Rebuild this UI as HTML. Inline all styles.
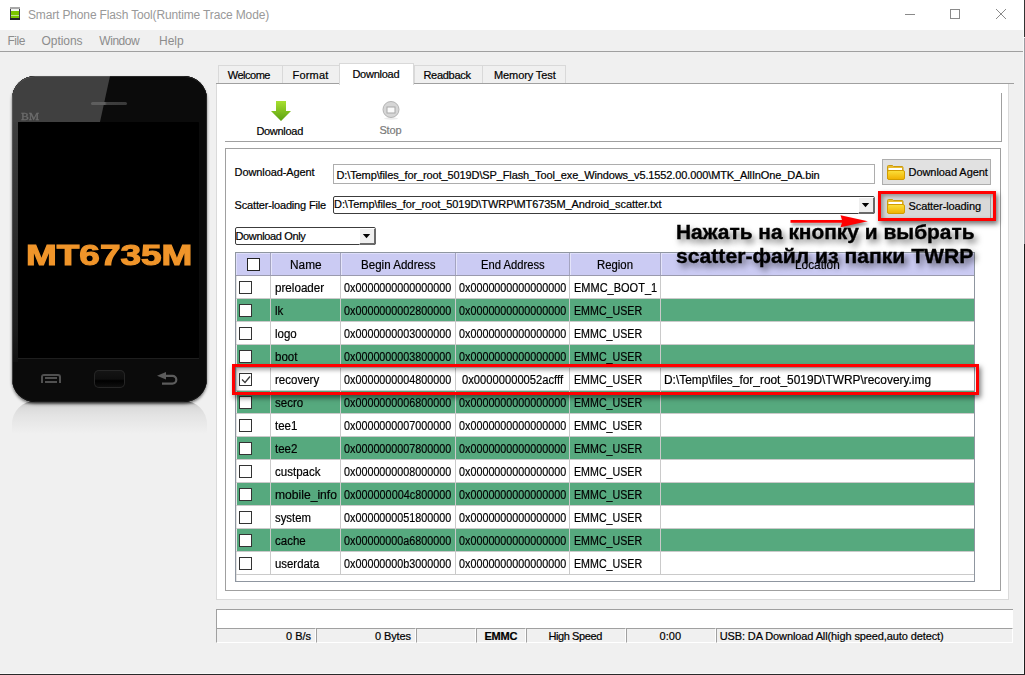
<!DOCTYPE html>
<html><head><meta charset="utf-8"><style>
html,body{margin:0;padding:0}
body{width:1025px;height:675px;overflow:hidden;position:relative;background:#f0f0f0;font-family:"Liberation Sans",sans-serif}
body div{position:absolute}
.t{white-space:nowrap;-webkit-text-stroke:0.2px currentColor}
</style></head><body>
<div style="left:0px;top:0px;width:1025px;height:30px;background:#fff"></div>
<div style="left:10px;top:7px;width:10px;height:13px;background:#3c3c46"></div>
<div style="left:10px;top:7px;width:10px;height:2px;background:#a8a8a8"></div>
<div style="left:11px;top:9px;width:8px;height:9px;background:#7cc400"></div>
<div style="left:11px;top:9px;width:8px;height:2px;background:#f2f4f2"></div>
<div style="left:11px;top:15px;width:8px;height:1px;background:#bfe38a"></div>
<div style="left:10px;top:18px;width:10px;height:2px;background:#24242e"></div>
<div class="t" style="left:28.00px;top:8.84px;font-size:12px;line-height:12px;color:#999;font-weight:normal;letter-spacing:-0.147px;-webkit-text-stroke:0">Smart Phone Flash Tool(Runtime Trace Mode)</div>
<div style="left:905px;top:14px;width:10px;height:1px;background:#8a8a8a"></div>
<div style="left:950px;top:9px;width:10px;height:10px;border:1px solid #8a8a8a;box-sizing:border-box"></div>
<svg style="position:absolute;left:995px;top:8px" width="12" height="12"><path d="M1 1L11 11M11 1L1 11" stroke="#8a8a8a" stroke-width="1"/></svg>
<div style="left:0px;top:30px;width:1024px;height:21px;background:#f0f0f0"></div>
<div style="left:0px;top:51px;width:1024px;height:1px;background:#a0a0a0"></div>
<div class="t" style="left:7.50px;top:34.84px;font-size:12px;line-height:12px;color:#8c8c8c;font-weight:normal;letter-spacing:-0.461px;-webkit-text-stroke:0">File</div>
<div class="t" style="left:41.50px;top:34.84px;font-size:12px;line-height:12px;color:#8c8c8c;font-weight:normal;letter-spacing:-0.049px;-webkit-text-stroke:0">Options</div>
<div class="t" style="left:99.30px;top:34.84px;font-size:12px;line-height:12px;color:#8c8c8c;font-weight:normal;letter-spacing:-0.448px;-webkit-text-stroke:0">Window</div>
<div class="t" style="left:159.10px;top:34.84px;font-size:12px;line-height:12px;color:#8c8c8c;font-weight:normal;letter-spacing:-0.047px;-webkit-text-stroke:0">Help</div>
<div style="left:1024px;top:0px;width:1px;height:37px;background:#333"></div>
<div style="left:1024px;top:38px;width:1px;height:206px;background:#9a9aa0"></div>
<div style="left:1024px;top:244px;width:1px;height:431px;background:#1e1e1e"></div>
<div style="left:0px;top:673px;width:1024px;height:1px;background:#f8f8f8"></div>
<div style="left:0px;top:674px;width:1025px;height:1px;background:#2a2a2a"></div>
<div style="left:1023px;top:30px;width:1px;height:643px;background:#f8f8f8"></div>
<div style="left:12px;top:401px;width:195px;height:33px;background:linear-gradient(#3a3a3a 0px,#a4a4a4 2px,#d0d0d0 4px,#dbdbdb 7px,#e3e3e3 14px,#eaeaea 24px,#f0f0f0 33px);border-radius:23px 23px 0 0"></div>
<div style="left:12px;top:76px;width:195px;height:326px;border-radius:23px;background:#0b0b0b;box-shadow:0 2px 3px rgba(0,0,0,.55)"></div>
<div style="left:12px;top:76px;width:195px;height:326px;border-radius:23px;background:#0b0b0b;overflow:hidden">
<div style="left:0;top:0;width:195px;height:46px;background:#0b0b0b"></div>
<svg style="position:absolute;left:0;top:0" width="195" height="325"><polygon points="0,0 98,0 88,46 0,46" fill="#404040"/></svg>
<div style="left:79px;top:26px;width:36px;height:3px;border-radius:2px;background:linear-gradient(90deg,#5e5e5e,#5e5e5e 38%,#3e3e3e 44%,#3a3a3a)"></div>
<div style="left:9px;top:35.5px;font:10px 'Liberation Serif',serif;color:#6c6c6c;line-height:10px;transform-origin:0 0;transform:scaleX(1.17);-webkit-text-stroke:0.3px #6c6c6c">BM</div>
<div style="left:0;top:46px;width:6px;height:240px;background:linear-gradient(#3e3e3e,#333 30%,#1c1c1c 85%,#101010)"></div>
<div style="left:0;top:0;width:1px;height:325px;background:linear-gradient(#5a5a5a,#4a4a4a 50%,#3a3a3a)"></div>
<div style="left:194px;top:0;width:1px;height:326px;background:#262626"></div>
<div style="left:0;top:0;width:195px;height:326px;border-radius:23px;box-shadow:inset 0 1px 0 rgba(255,255,255,.12),inset 0 -1px 0 rgba(255,255,255,.06)"></div>
<div style="left:6px;top:46px;width:181px;height:236px;background:#000;border-radius:1px"></div>
<div style="left:6px;top:282px;width:181px;height:1px;background:#1e1e1e"></div>
<div style="left:29px;top:298px;width:20px;height:9px;border:2px solid #505050;border-bottom:none;border-radius:3px 3px 0 0;box-sizing:border-box"></div>
<div style="left:33px;top:301px;width:12px;height:2px;background:#505050"></div>
<div style="left:33px;top:305px;width:12px;height:2px;background:#505050"></div>
<div style="left:82px;top:294px;width:31px;height:18px;border-radius:5px;background:linear-gradient(#151515,#0e0e0e 50%,#000 60%,#111);box-shadow:inset 0 0 0 1px #262626"></div>
<svg style="position:absolute;left:144px;top:296px" width="24" height="14"><path d="M9 3.8H16.4A3.9 3.9 0 0 1 16.4 11.6H6" fill="none" stroke="#5c5c5c" stroke-width="2.2"/><path d="M1 3.8L10 0V7.6Z" fill="#5c5c5c"/></svg>
</div>
<div class="t" style="left:26.2px;top:240.6px;font-size:29px;line-height:29px;font-weight:bold;color:#f0952a;-webkit-text-stroke:1.1px #f0952a;transform-origin:0 0;transform:scaleX(1.274)">MT6735M</div>
<div style="left:218px;top:65px;width:65px;height:19px;background:#f0f0f0;border:1px solid #d9d9d9;box-sizing:border-box"></div>
<div style="left:282px;top:65px;width:58px;height:19px;background:#f0f0f0;border:1px solid #d9d9d9;box-sizing:border-box"></div>
<div style="left:414px;top:65px;width:69px;height:19px;background:#f0f0f0;border:1px solid #d9d9d9;box-sizing:border-box"></div>
<div style="left:482px;top:65px;width:84px;height:19px;background:#f0f0f0;border:1px solid #d9d9d9;box-sizing:border-box"></div>
<div style="left:216px;top:83px;width:798px;height:1px;background:#a0a0a0"></div>
<div style="left:216px;top:84px;width:793px;height:516px;background:#fff;border-left:1px solid #dadada;border-right:1px solid #dadada;border-bottom:1px solid #dadada;box-sizing:border-box"></div>
<div style="left:339px;top:63px;width:75px;height:22px;background:#fff;border:1px solid #d9d9d9;border-bottom:none;box-sizing:border-box"></div>
<div class="t" style="left:227.80px;top:69.69px;font-size:11px;line-height:11px;color:#000;font-weight:normal;letter-spacing:-0.492px;">Welcome</div>
<div class="t" style="left:292.50px;top:69.69px;font-size:11px;line-height:11px;color:#000;font-weight:normal;letter-spacing:0.193px;">Format</div>
<div class="t" style="left:352.40px;top:68.69px;font-size:11px;line-height:11px;color:#000;font-weight:normal;letter-spacing:-0.242px;">Download</div>
<div class="t" style="left:423.40px;top:69.69px;font-size:11px;line-height:11px;color:#000;font-weight:normal;letter-spacing:-0.283px;">Readback</div>
<div class="t" style="left:494.00px;top:69.69px;font-size:11px;line-height:11px;color:#000;font-weight:normal;letter-spacing:-0.106px;">Memory Test</div>
<div style="left:225px;top:141px;width:777px;height:1px;background:#a0a0a0"></div>
<div style="left:1001px;top:93px;width:1px;height:49px;background:#a0a0a0"></div>
<svg style="position:absolute;left:270px;top:100px" width="22" height="22"><defs><linearGradient id="ga" x1="0" y1="0" x2="0" y2="1"><stop offset="0" stop-color="#a8e030"/><stop offset="1" stop-color="#5aa010"/></linearGradient></defs><path d="M6 1H16V11H21L11 21L1 11H6Z" fill="url(#ga)"/></svg>
<div class="t" style="left:256.40px;top:125.69px;font-size:11px;line-height:11px;color:#000;font-weight:normal;letter-spacing:-0.292px;">Download</div>
<svg style="position:absolute;left:381px;top:100px" width="20" height="20"><ellipse cx="10" cy="18.5" rx="7" ry="1.2" fill="#ececec"/><circle cx="10" cy="9.5" r="8" fill="#d6d6d6" stroke="#b4b4b4" stroke-width="1"/><rect x="6" y="7" width="8" height="6" fill="#fafafa" stroke="#a8a8a8" stroke-width="1"/></svg>
<div class="t" style="left:379.40px;top:124.69px;font-size:11px;line-height:11px;color:#7a7a7a;font-weight:normal;letter-spacing:-0.164px;">Stop</div>
<div style="left:225px;top:148px;width:776px;height:443px;border:1px solid #a0a0a0;box-sizing:border-box"></div>
<div class="t" style="left:234.60px;top:166.69px;font-size:11px;line-height:11px;color:#000;font-weight:normal;letter-spacing:-0.098px;">Download-Agent</div>
<div style="left:333px;top:164px;width:542px;height:20px;background:#fff;border:1px solid #adadad;box-sizing:border-box"></div>
<div class="t" style="left:336.50px;top:170.19px;font-size:11px;line-height:11px;color:#000;font-weight:normal;letter-spacing:-0.116px;">D:\Temp\files_for_root_5019D\SP_Flash_Tool_exe_Windows_v5.1552.00.000\MTK_AllInOne_DA.bin</div>
<div style="left:882px;top:159px;width:109px;height:26px;background:#e1e1e1;border:1px solid #adadad;box-sizing:border-box"></div>
<svg style="position:absolute;left:887px;top:165px" width="18" height="15"><defs><linearGradient id="fg" x1="0" y1="0" x2="0" y2="1"><stop offset="0" stop-color="#fbe03c"/><stop offset="1" stop-color="#f0b000"/></linearGradient></defs><path d="M0.5 14V1.5Q0.5 0.5 1.5 0.5H5.5L6.5 1.5H15Q16 1.5 16 2.5V6H0.5Z" fill="#ebbd2e" stroke="#c99a10"/><rect x="1.5" y="3" width="13.5" height="2" fill="#fff"/><rect x="0.5" y="5.5" width="17" height="9" rx="1.5" fill="url(#fg)" stroke="#d29c00"/></svg>
<div class="t" style="left:908.50px;top:166.69px;font-size:11px;line-height:11px;color:#000;font-weight:normal;letter-spacing:-0.055px;">Download Agent</div>
<div class="t" style="left:234.60px;top:200.19px;font-size:11px;line-height:11px;color:#000;font-weight:normal;letter-spacing:-0.171px;">Scatter-loading File</div>
<div style="left:333px;top:196px;width:542px;height:18px;background:#fff;border:1px solid #3c3c3c;border-radius:2px;box-sizing:border-box"></div>
<div class="t" style="left:334.00px;top:199.49px;font-size:11px;line-height:11px;color:#000;font-weight:normal;letter-spacing:-0.065px;">D:\Temp\files_for_root_5019D\TWRP\MT6735M_Android_scatter.txt</div>
<div style="left:858px;top:197px;width:17px;height:17px;background:#efefef;border-top:1px solid #fff;border-left:1px solid #fff;border-right:2px solid #6a6a6a;border-bottom:2px solid #6a6a6a;border-radius:0 0 3px 0;box-sizing:border-box"></div>
<svg style="position:absolute;left:861px;top:202px" width="10" height="7"><path d="M0.8 1H8.2L4.5 5.2Z" fill="#000"/></svg>
<div style="left:878px;top:191px;width:118px;height:30px;box-shadow:2px 3px 5px rgba(0,0,0,.55)"></div>
<div style="left:881px;top:194px;width:112px;height:24px;background:#d8d8d8;box-shadow:inset 2px 2px 4px rgba(0,0,0,.35)"></div>
<svg style="position:absolute;left:887px;top:199px" width="18" height="15"><defs><linearGradient id="fg" x1="0" y1="0" x2="0" y2="1"><stop offset="0" stop-color="#fbe03c"/><stop offset="1" stop-color="#f0b000"/></linearGradient></defs><path d="M0.5 14V1.5Q0.5 0.5 1.5 0.5H5.5L6.5 1.5H15Q16 1.5 16 2.5V6H0.5Z" fill="#ebbd2e" stroke="#c99a10"/><rect x="1.5" y="3" width="13.5" height="2" fill="#fff"/><rect x="0.5" y="5.5" width="17" height="9" rx="1.5" fill="url(#fg)" stroke="#d29c00"/></svg>
<div class="t" style="left:908.50px;top:200.99px;font-size:11px;line-height:11px;color:#000;font-weight:normal;letter-spacing:-0.102px;">Scatter-loading</div>
<div style="left:990px;top:194px;width:1px;height:24px;background:#9a9a9a"></div>
<div style="left:878px;top:191px;width:118px;height:30px;border:3px solid #f00;box-sizing:border-box"></div>
<div style="left:235px;top:227px;width:141px;height:18px;background:#fff;border:1px solid #3c3c3c;border-radius:2px;box-sizing:border-box"></div>
<div class="t" style="left:235.50px;top:230.69px;font-size:11px;line-height:11px;color:#000;font-weight:normal;letter-spacing:-0.356px;">Download Only</div>
<div style="left:359px;top:228px;width:17px;height:17px;background:#efefef;border-top:1px solid #fff;border-left:1px solid #fff;border-right:2px solid #6a6a6a;border-bottom:2px solid #6a6a6a;border-radius:0 0 3px 0;box-sizing:border-box"></div>
<svg style="position:absolute;left:362px;top:233px" width="10" height="7"><path d="M0.8 1H8.2L4.5 5.2Z" fill="#000"/></svg>
<div style="left:235px;top:252px;width:740px;height:330px;border:1px solid #8f96a0;box-sizing:border-box;background:#fff"></div>
<div style="left:236px;top:253px;width:738px;height:22px;background:#cbcbf3"></div>
<div style="left:236px;top:253px;width:738px;height:1px;background:#dedefa"></div>
<div style="left:236px;top:253px;width:1px;height:22px;background:#dedefa"></div>
<div style="left:236px;top:276px;width:1px;height:305px;background:#e4e4e4"></div>
<div style="left:236px;top:275px;width:738px;height:1px;background:#9a9aae"></div>
<div style="left:270px;top:253px;width:1px;height:22px;background:#a4a4c0"></div>
<div style="left:271px;top:253px;width:1px;height:22px;background:#e4e4fa"></div>
<div style="left:340px;top:253px;width:1px;height:22px;background:#a4a4c0"></div>
<div style="left:341px;top:253px;width:1px;height:22px;background:#e4e4fa"></div>
<div style="left:455px;top:253px;width:1px;height:22px;background:#a4a4c0"></div>
<div style="left:456px;top:253px;width:1px;height:22px;background:#e4e4fa"></div>
<div style="left:569px;top:253px;width:1px;height:22px;background:#a4a4c0"></div>
<div style="left:570px;top:253px;width:1px;height:22px;background:#e4e4fa"></div>
<div style="left:660px;top:253px;width:1px;height:22px;background:#a4a4c0"></div>
<div style="left:661px;top:253px;width:1px;height:22px;background:#e4e4fa"></div>
<div style="left:247px;top:258px;width:13px;height:13px;background:#fff;border:1px solid #222;box-sizing:border-box"></div>
<div class="t" style="left:289.70px;top:258.84px;font-size:12px;line-height:12px;color:#000;font-weight:normal;letter-spacing:0.000px;transform-origin:0 0;transform:scaleX(0.9870);">Name</div>
<div class="t" style="left:361.40px;top:258.84px;font-size:12px;line-height:12px;color:#000;font-weight:normal;letter-spacing:0.000px;transform-origin:0 0;transform:scaleX(0.9641);">Begin Address</div>
<div class="t" style="left:481.30px;top:258.84px;font-size:12px;line-height:12px;color:#000;font-weight:normal;letter-spacing:0.000px;transform-origin:0 0;transform:scaleX(0.9349);">End Address</div>
<div class="t" style="left:597.00px;top:258.84px;font-size:12px;line-height:12px;color:#000;font-weight:normal;letter-spacing:0.000px;transform-origin:0 0;transform:scaleX(0.9466);">Region</div>
<div class="t" style="left:794.65px;top:258.84px;font-size:12px;line-height:12px;color:#000;font-weight:normal;letter-spacing:0.000px;transform-origin:0 0;transform:scaleX(0.9855);">Location</div>
<div style="left:236px;top:298px;width:738px;height:1px;background:#cacaca"></div>
<div style="left:270px;top:276px;width:1px;height:23px;background:#cacaca"></div>
<div style="left:340px;top:276px;width:1px;height:23px;background:#cacaca"></div>
<div style="left:455px;top:276px;width:1px;height:23px;background:#cacaca"></div>
<div style="left:569px;top:276px;width:1px;height:23px;background:#cacaca"></div>
<div style="left:660px;top:276px;width:1px;height:23px;background:#cacaca"></div>
<div style="left:239px;top:281px;width:13px;height:13px;background:#fff;border:1px solid #333;box-sizing:border-box"></div>
<div class="t" style="left:275.00px;top:281.84px;font-size:12px;line-height:12px;color:#000;font-weight:normal;letter-spacing:0.000px;transform-origin:0 0;transform:scaleX(0.9704);">preloader</div>
<div class="t" style="left:343.85px;top:281.84px;font-size:12px;line-height:12px;color:#000;font-weight:normal;letter-spacing:0.000px;transform-origin:0 0;transform:scaleX(0.8985);">0x0000000000000000</div>
<div class="t" style="left:458.85px;top:281.84px;font-size:12px;line-height:12px;color:#000;font-weight:normal;letter-spacing:0.000px;transform-origin:0 0;transform:scaleX(0.8985);">0x0000000000000000</div>
<div class="t" style="left:573.50px;top:281.84px;font-size:12px;line-height:12px;color:#000;font-weight:normal;letter-spacing:0.000px;transform-origin:0 0;transform:scaleX(0.9165);">EMMC_BOOT_1</div>
<div style="left:237px;top:299px;width:737px;height:22px;background:#56a97e"></div>
<div style="left:236px;top:321px;width:738px;height:1px;background:#cacaca"></div>
<div style="left:270px;top:299px;width:1px;height:23px;background:#cacaca"></div>
<div style="left:340px;top:299px;width:1px;height:23px;background:#cacaca"></div>
<div style="left:455px;top:299px;width:1px;height:23px;background:#cacaca"></div>
<div style="left:569px;top:299px;width:1px;height:23px;background:#cacaca"></div>
<div style="left:660px;top:299px;width:1px;height:23px;background:#cacaca"></div>
<div style="left:239px;top:304px;width:13px;height:13px;background:#fff;border:1px solid #333;box-sizing:border-box"></div>
<div class="t" style="left:275.00px;top:304.84px;font-size:12px;line-height:12px;color:#000;font-weight:normal;letter-spacing:0.000px;transform-origin:0 0;transform:scaleX(0.9600);">lk</div>
<div class="t" style="left:343.85px;top:304.84px;font-size:12px;line-height:12px;color:#000;font-weight:normal;letter-spacing:0.000px;transform-origin:0 0;transform:scaleX(0.8985);">0x0000000002800000</div>
<div class="t" style="left:458.85px;top:304.84px;font-size:12px;line-height:12px;color:#000;font-weight:normal;letter-spacing:0.000px;transform-origin:0 0;transform:scaleX(0.8985);">0x0000000000000000</div>
<div class="t" style="left:573.50px;top:304.84px;font-size:12px;line-height:12px;color:#000;font-weight:normal;letter-spacing:0.000px;transform-origin:0 0;transform:scaleX(0.8893);">EMMC_USER</div>
<div style="left:236px;top:344px;width:738px;height:1px;background:#cacaca"></div>
<div style="left:270px;top:322px;width:1px;height:23px;background:#cacaca"></div>
<div style="left:340px;top:322px;width:1px;height:23px;background:#cacaca"></div>
<div style="left:455px;top:322px;width:1px;height:23px;background:#cacaca"></div>
<div style="left:569px;top:322px;width:1px;height:23px;background:#cacaca"></div>
<div style="left:660px;top:322px;width:1px;height:23px;background:#cacaca"></div>
<div style="left:239px;top:327px;width:13px;height:13px;background:#fff;border:1px solid #333;box-sizing:border-box"></div>
<div class="t" style="left:275.00px;top:327.84px;font-size:12px;line-height:12px;color:#000;font-weight:normal;letter-spacing:0.000px;transform-origin:0 0;transform:scaleX(0.9600);">logo</div>
<div class="t" style="left:343.85px;top:327.84px;font-size:12px;line-height:12px;color:#000;font-weight:normal;letter-spacing:0.000px;transform-origin:0 0;transform:scaleX(0.8985);">0x0000000003000000</div>
<div class="t" style="left:458.85px;top:327.84px;font-size:12px;line-height:12px;color:#000;font-weight:normal;letter-spacing:0.000px;transform-origin:0 0;transform:scaleX(0.8985);">0x0000000000000000</div>
<div class="t" style="left:573.50px;top:327.84px;font-size:12px;line-height:12px;color:#000;font-weight:normal;letter-spacing:0.000px;transform-origin:0 0;transform:scaleX(0.8893);">EMMC_USER</div>
<div style="left:237px;top:345px;width:737px;height:22px;background:#56a97e"></div>
<div style="left:236px;top:367px;width:738px;height:1px;background:#cacaca"></div>
<div style="left:270px;top:345px;width:1px;height:23px;background:#cacaca"></div>
<div style="left:340px;top:345px;width:1px;height:23px;background:#cacaca"></div>
<div style="left:455px;top:345px;width:1px;height:23px;background:#cacaca"></div>
<div style="left:569px;top:345px;width:1px;height:23px;background:#cacaca"></div>
<div style="left:660px;top:345px;width:1px;height:23px;background:#cacaca"></div>
<div style="left:239px;top:350px;width:13px;height:13px;background:#fff;border:1px solid #333;box-sizing:border-box"></div>
<div class="t" style="left:275.00px;top:350.84px;font-size:12px;line-height:12px;color:#000;font-weight:normal;letter-spacing:0.000px;transform-origin:0 0;transform:scaleX(0.9600);">boot</div>
<div class="t" style="left:343.85px;top:350.84px;font-size:12px;line-height:12px;color:#000;font-weight:normal;letter-spacing:0.000px;transform-origin:0 0;transform:scaleX(0.8985);">0x0000000003800000</div>
<div class="t" style="left:458.85px;top:350.84px;font-size:12px;line-height:12px;color:#000;font-weight:normal;letter-spacing:0.000px;transform-origin:0 0;transform:scaleX(0.8985);">0x0000000000000000</div>
<div class="t" style="left:573.50px;top:350.84px;font-size:12px;line-height:12px;color:#000;font-weight:normal;letter-spacing:0.000px;transform-origin:0 0;transform:scaleX(0.8893);">EMMC_USER</div>
<div style="left:236px;top:390px;width:738px;height:1px;background:#cacaca"></div>
<div style="left:270px;top:368px;width:1px;height:23px;background:#cacaca"></div>
<div style="left:340px;top:368px;width:1px;height:23px;background:#cacaca"></div>
<div style="left:455px;top:368px;width:1px;height:23px;background:#cacaca"></div>
<div style="left:569px;top:368px;width:1px;height:23px;background:#cacaca"></div>
<div style="left:660px;top:368px;width:1px;height:23px;background:#cacaca"></div>
<div style="left:239px;top:373px;width:13px;height:13px;background:#fff;border:1px solid #333;box-sizing:border-box"></div>
<div class="t" style="left:275.00px;top:373.84px;font-size:12px;line-height:12px;color:#000;font-weight:normal;letter-spacing:0.000px;transform-origin:0 0;transform:scaleX(0.9600);">recovery</div>
<div class="t" style="left:343.85px;top:373.84px;font-size:12px;line-height:12px;color:#000;font-weight:normal;letter-spacing:0.000px;transform-origin:0 0;transform:scaleX(0.8985);">0x0000000004800000</div>
<div class="t" style="left:462.00px;top:373.84px;font-size:12px;line-height:12px;color:#000;font-weight:normal;letter-spacing:0.000px;transform-origin:0 0;transform:scaleX(0.9328);">0x00000000052acfff</div>
<div class="t" style="left:573.50px;top:373.84px;font-size:12px;line-height:12px;color:#000;font-weight:normal;letter-spacing:0.000px;transform-origin:0 0;transform:scaleX(0.8893);">EMMC_USER</div>
<div style="left:237px;top:391px;width:737px;height:22px;background:#56a97e"></div>
<div style="left:236px;top:413px;width:738px;height:1px;background:#cacaca"></div>
<div style="left:270px;top:391px;width:1px;height:23px;background:#cacaca"></div>
<div style="left:340px;top:391px;width:1px;height:23px;background:#cacaca"></div>
<div style="left:455px;top:391px;width:1px;height:23px;background:#cacaca"></div>
<div style="left:569px;top:391px;width:1px;height:23px;background:#cacaca"></div>
<div style="left:660px;top:391px;width:1px;height:23px;background:#cacaca"></div>
<div style="left:239px;top:396px;width:13px;height:13px;background:#fff;border:1px solid #333;box-sizing:border-box"></div>
<div class="t" style="left:275.00px;top:396.84px;font-size:12px;line-height:12px;color:#000;font-weight:normal;letter-spacing:0.000px;transform-origin:0 0;transform:scaleX(0.9600);">secro</div>
<div class="t" style="left:343.85px;top:396.84px;font-size:12px;line-height:12px;color:#000;font-weight:normal;letter-spacing:0.000px;transform-origin:0 0;transform:scaleX(0.8985);">0x0000000006800000</div>
<div class="t" style="left:458.85px;top:396.84px;font-size:12px;line-height:12px;color:#000;font-weight:normal;letter-spacing:0.000px;transform-origin:0 0;transform:scaleX(0.8985);">0x0000000000000000</div>
<div class="t" style="left:573.50px;top:396.84px;font-size:12px;line-height:12px;color:#000;font-weight:normal;letter-spacing:0.000px;transform-origin:0 0;transform:scaleX(0.8893);">EMMC_USER</div>
<div style="left:236px;top:436px;width:738px;height:1px;background:#cacaca"></div>
<div style="left:270px;top:414px;width:1px;height:23px;background:#cacaca"></div>
<div style="left:340px;top:414px;width:1px;height:23px;background:#cacaca"></div>
<div style="left:455px;top:414px;width:1px;height:23px;background:#cacaca"></div>
<div style="left:569px;top:414px;width:1px;height:23px;background:#cacaca"></div>
<div style="left:660px;top:414px;width:1px;height:23px;background:#cacaca"></div>
<div style="left:239px;top:419px;width:13px;height:13px;background:#fff;border:1px solid #333;box-sizing:border-box"></div>
<div class="t" style="left:275.00px;top:419.84px;font-size:12px;line-height:12px;color:#000;font-weight:normal;letter-spacing:0.000px;transform-origin:0 0;transform:scaleX(0.9600);">tee1</div>
<div class="t" style="left:343.85px;top:419.84px;font-size:12px;line-height:12px;color:#000;font-weight:normal;letter-spacing:0.000px;transform-origin:0 0;transform:scaleX(0.8985);">0x0000000007000000</div>
<div class="t" style="left:458.85px;top:419.84px;font-size:12px;line-height:12px;color:#000;font-weight:normal;letter-spacing:0.000px;transform-origin:0 0;transform:scaleX(0.8985);">0x0000000000000000</div>
<div class="t" style="left:573.50px;top:419.84px;font-size:12px;line-height:12px;color:#000;font-weight:normal;letter-spacing:0.000px;transform-origin:0 0;transform:scaleX(0.8893);">EMMC_USER</div>
<div style="left:237px;top:437px;width:737px;height:22px;background:#56a97e"></div>
<div style="left:236px;top:459px;width:738px;height:1px;background:#cacaca"></div>
<div style="left:270px;top:437px;width:1px;height:23px;background:#cacaca"></div>
<div style="left:340px;top:437px;width:1px;height:23px;background:#cacaca"></div>
<div style="left:455px;top:437px;width:1px;height:23px;background:#cacaca"></div>
<div style="left:569px;top:437px;width:1px;height:23px;background:#cacaca"></div>
<div style="left:660px;top:437px;width:1px;height:23px;background:#cacaca"></div>
<div style="left:239px;top:442px;width:13px;height:13px;background:#fff;border:1px solid #333;box-sizing:border-box"></div>
<div class="t" style="left:275.00px;top:442.84px;font-size:12px;line-height:12px;color:#000;font-weight:normal;letter-spacing:0.000px;transform-origin:0 0;transform:scaleX(0.9600);">tee2</div>
<div class="t" style="left:343.85px;top:442.84px;font-size:12px;line-height:12px;color:#000;font-weight:normal;letter-spacing:0.000px;transform-origin:0 0;transform:scaleX(0.8985);">0x0000000007800000</div>
<div class="t" style="left:458.85px;top:442.84px;font-size:12px;line-height:12px;color:#000;font-weight:normal;letter-spacing:0.000px;transform-origin:0 0;transform:scaleX(0.8985);">0x0000000000000000</div>
<div class="t" style="left:573.50px;top:442.84px;font-size:12px;line-height:12px;color:#000;font-weight:normal;letter-spacing:0.000px;transform-origin:0 0;transform:scaleX(0.8893);">EMMC_USER</div>
<div style="left:236px;top:482px;width:738px;height:1px;background:#cacaca"></div>
<div style="left:270px;top:460px;width:1px;height:23px;background:#cacaca"></div>
<div style="left:340px;top:460px;width:1px;height:23px;background:#cacaca"></div>
<div style="left:455px;top:460px;width:1px;height:23px;background:#cacaca"></div>
<div style="left:569px;top:460px;width:1px;height:23px;background:#cacaca"></div>
<div style="left:660px;top:460px;width:1px;height:23px;background:#cacaca"></div>
<div style="left:239px;top:465px;width:13px;height:13px;background:#fff;border:1px solid #333;box-sizing:border-box"></div>
<div class="t" style="left:275.00px;top:465.84px;font-size:12px;line-height:12px;color:#000;font-weight:normal;letter-spacing:0.000px;transform-origin:0 0;transform:scaleX(0.9600);">custpack</div>
<div class="t" style="left:343.85px;top:465.84px;font-size:12px;line-height:12px;color:#000;font-weight:normal;letter-spacing:0.000px;transform-origin:0 0;transform:scaleX(0.8985);">0x0000000008000000</div>
<div class="t" style="left:458.85px;top:465.84px;font-size:12px;line-height:12px;color:#000;font-weight:normal;letter-spacing:0.000px;transform-origin:0 0;transform:scaleX(0.8985);">0x0000000000000000</div>
<div class="t" style="left:573.50px;top:465.84px;font-size:12px;line-height:12px;color:#000;font-weight:normal;letter-spacing:0.000px;transform-origin:0 0;transform:scaleX(0.8893);">EMMC_USER</div>
<div style="left:237px;top:483px;width:737px;height:22px;background:#56a97e"></div>
<div style="left:236px;top:505px;width:738px;height:1px;background:#cacaca"></div>
<div style="left:270px;top:483px;width:1px;height:23px;background:#cacaca"></div>
<div style="left:340px;top:483px;width:1px;height:23px;background:#cacaca"></div>
<div style="left:455px;top:483px;width:1px;height:23px;background:#cacaca"></div>
<div style="left:569px;top:483px;width:1px;height:23px;background:#cacaca"></div>
<div style="left:660px;top:483px;width:1px;height:23px;background:#cacaca"></div>
<div style="left:239px;top:488px;width:13px;height:13px;background:#fff;border:1px solid #333;box-sizing:border-box"></div>
<div class="t" style="left:275.00px;top:488.84px;font-size:12px;line-height:12px;color:#000;font-weight:normal;letter-spacing:0.000px;transform-origin:0 0;transform:scaleX(1.0086);">mobile_info</div>
<div class="t" style="left:343.85px;top:488.84px;font-size:12px;line-height:12px;color:#000;font-weight:normal;letter-spacing:0.000px;transform-origin:0 0;transform:scaleX(0.9036);">0x000000004c800000</div>
<div class="t" style="left:458.85px;top:488.84px;font-size:12px;line-height:12px;color:#000;font-weight:normal;letter-spacing:0.000px;transform-origin:0 0;transform:scaleX(0.8985);">0x0000000000000000</div>
<div class="t" style="left:573.50px;top:488.84px;font-size:12px;line-height:12px;color:#000;font-weight:normal;letter-spacing:0.000px;transform-origin:0 0;transform:scaleX(0.8893);">EMMC_USER</div>
<div style="left:236px;top:528px;width:738px;height:1px;background:#cacaca"></div>
<div style="left:270px;top:506px;width:1px;height:23px;background:#cacaca"></div>
<div style="left:340px;top:506px;width:1px;height:23px;background:#cacaca"></div>
<div style="left:455px;top:506px;width:1px;height:23px;background:#cacaca"></div>
<div style="left:569px;top:506px;width:1px;height:23px;background:#cacaca"></div>
<div style="left:660px;top:506px;width:1px;height:23px;background:#cacaca"></div>
<div style="left:239px;top:511px;width:13px;height:13px;background:#fff;border:1px solid #333;box-sizing:border-box"></div>
<div class="t" style="left:275.00px;top:511.84px;font-size:12px;line-height:12px;color:#000;font-weight:normal;letter-spacing:0.000px;transform-origin:0 0;transform:scaleX(0.9474);">system</div>
<div class="t" style="left:343.85px;top:511.84px;font-size:12px;line-height:12px;color:#000;font-weight:normal;letter-spacing:0.000px;transform-origin:0 0;transform:scaleX(0.8985);">0x0000000051800000</div>
<div class="t" style="left:458.85px;top:511.84px;font-size:12px;line-height:12px;color:#000;font-weight:normal;letter-spacing:0.000px;transform-origin:0 0;transform:scaleX(0.8985);">0x0000000000000000</div>
<div class="t" style="left:573.50px;top:511.84px;font-size:12px;line-height:12px;color:#000;font-weight:normal;letter-spacing:0.000px;transform-origin:0 0;transform:scaleX(0.8893);">EMMC_USER</div>
<div style="left:237px;top:529px;width:737px;height:22px;background:#56a97e"></div>
<div style="left:236px;top:551px;width:738px;height:1px;background:#cacaca"></div>
<div style="left:270px;top:529px;width:1px;height:23px;background:#cacaca"></div>
<div style="left:340px;top:529px;width:1px;height:23px;background:#cacaca"></div>
<div style="left:455px;top:529px;width:1px;height:23px;background:#cacaca"></div>
<div style="left:569px;top:529px;width:1px;height:23px;background:#cacaca"></div>
<div style="left:660px;top:529px;width:1px;height:23px;background:#cacaca"></div>
<div style="left:239px;top:534px;width:13px;height:13px;background:#fff;border:1px solid #333;box-sizing:border-box"></div>
<div class="t" style="left:275.00px;top:534.84px;font-size:12px;line-height:12px;color:#000;font-weight:normal;letter-spacing:0.000px;transform-origin:0 0;transform:scaleX(0.9589);">cache</div>
<div class="t" style="left:343.85px;top:534.84px;font-size:12px;line-height:12px;color:#000;font-weight:normal;letter-spacing:0.000px;transform-origin:0 0;transform:scaleX(0.8985);">0x00000000a6800000</div>
<div class="t" style="left:458.85px;top:534.84px;font-size:12px;line-height:12px;color:#000;font-weight:normal;letter-spacing:0.000px;transform-origin:0 0;transform:scaleX(0.8985);">0x0000000000000000</div>
<div class="t" style="left:573.50px;top:534.84px;font-size:12px;line-height:12px;color:#000;font-weight:normal;letter-spacing:0.000px;transform-origin:0 0;transform:scaleX(0.8893);">EMMC_USER</div>
<div style="left:236px;top:574px;width:738px;height:1px;background:#cacaca"></div>
<div style="left:270px;top:552px;width:1px;height:23px;background:#cacaca"></div>
<div style="left:340px;top:552px;width:1px;height:23px;background:#cacaca"></div>
<div style="left:455px;top:552px;width:1px;height:23px;background:#cacaca"></div>
<div style="left:569px;top:552px;width:1px;height:23px;background:#cacaca"></div>
<div style="left:660px;top:552px;width:1px;height:23px;background:#cacaca"></div>
<div style="left:239px;top:557px;width:13px;height:13px;background:#fff;border:1px solid #333;box-sizing:border-box"></div>
<div class="t" style="left:275.00px;top:557.84px;font-size:12px;line-height:12px;color:#000;font-weight:normal;letter-spacing:0.000px;transform-origin:0 0;transform:scaleX(0.9489);">userdata</div>
<div class="t" style="left:343.85px;top:557.84px;font-size:12px;line-height:12px;color:#000;font-weight:normal;letter-spacing:0.000px;transform-origin:0 0;transform:scaleX(0.8985);">0x00000000b3000000</div>
<div class="t" style="left:458.85px;top:557.84px;font-size:12px;line-height:12px;color:#000;font-weight:normal;letter-spacing:0.000px;transform-origin:0 0;transform:scaleX(0.8985);">0x0000000000000000</div>
<div class="t" style="left:573.50px;top:557.84px;font-size:12px;line-height:12px;color:#000;font-weight:normal;letter-spacing:0.000px;transform-origin:0 0;transform:scaleX(0.8893);">EMMC_USER</div>
<div class="t" style="left:664.30px;top:373.84px;font-size:12px;line-height:12px;color:#000;font-weight:normal;letter-spacing:0.000px;transform-origin:0 0;transform:scaleX(0.9919);">D:\Temp\files_for_root_5019D\TWRP\recovery.img</div>
<svg style="position:absolute;left:241px;top:375px" width="10" height="9"><path d="M1 4.5L4 7.5L9 1.5" fill="none" stroke="#3a3a3a" stroke-width="1.3"/></svg>
<div style="left:232px;top:364px;width:747px;height:31px;box-shadow:2px 3px 5px rgba(0,0,0,.5)"></div>
<div style="left:235px;top:367px;width:741px;height:25px;box-shadow:inset 2px 3px 4px rgba(0,0,0,.35)"></div>
<div style="left:232px;top:364px;width:747px;height:31px;border:3px solid #f00;box-sizing:border-box"></div>
<svg style="position:absolute;left:785px;top:212px" width="90" height="22"><defs><filter id="sh" x="-20%" y="-50%" width="140%" height="200%"><feGaussianBlur stdDeviation="1.5"/></filter></defs>
<g transform="translate(1.5,2.5)" filter="url(#sh)" opacity=".45"><path d="M5.5 8H57L55.5 3.3L82.8 9.2L55.5 15.2L57 10.8H5.5Z" fill="#000"/></g>
<path d="M5.5 8H57L55.5 3.3L82.8 9.2L55.5 15.2L57 10.8H5.5Z" fill="#f00"/></svg>
<div class="t" style="left:675.50px;top:222.03px;font-size:20.4px;line-height:20.4px;color:#000;font-weight:bold;letter-spacing:0.000px;transform-origin:0 0;transform:scaleX(1.0252);text-shadow:3px 4px 6px rgba(0,0,0,.6);-webkit-text-stroke:0.35px #000">Нажать на кнопку и выбрать</div>
<div class="t" style="left:675.50px;top:246.03px;font-size:20.4px;line-height:20.4px;color:#000;font-weight:bold;letter-spacing:0.000px;transform-origin:0 0;transform:scaleX(1.0374);text-shadow:3px 4px 6px rgba(0,0,0,.6);-webkit-text-stroke:0.35px #000">scatter-файл из папки TWRP</div>
<div style="left:216px;top:609px;width:797px;height:20px;background:#fff;border-top:1px solid #a0a0a0;border-left:1px solid #a0a0a0;box-sizing:border-box"></div>
<div style="left:216px;top:628px;width:100px;height:15px;background:#f0f0f0;border-top:1px solid #a0a0a0;border-left:1px solid #a0a0a0;border-bottom:1px solid #fff;border-right:1px solid #fff;box-sizing:border-box"></div>
<div style="left:316px;top:628px;width:100px;height:15px;background:#f0f0f0;border-top:1px solid #a0a0a0;border-left:1px solid #a0a0a0;border-bottom:1px solid #fff;border-right:1px solid #fff;box-sizing:border-box"></div>
<div style="left:416px;top:628px;width:60px;height:15px;background:#f0f0f0;border-top:1px solid #a0a0a0;border-left:1px solid #a0a0a0;border-bottom:1px solid #fff;border-right:1px solid #fff;box-sizing:border-box"></div>
<div style="left:476px;top:628px;width:50px;height:15px;background:#f0f0f0;border-top:1px solid #a0a0a0;border-left:1px solid #a0a0a0;border-bottom:1px solid #fff;border-right:1px solid #fff;box-sizing:border-box"></div>
<div style="left:526px;top:628px;width:100px;height:15px;background:#f0f0f0;border-top:1px solid #a0a0a0;border-left:1px solid #a0a0a0;border-bottom:1px solid #fff;border-right:1px solid #fff;box-sizing:border-box"></div>
<div style="left:626px;top:628px;width:90px;height:15px;background:#f0f0f0;border-top:1px solid #a0a0a0;border-left:1px solid #a0a0a0;border-bottom:1px solid #fff;border-right:1px solid #fff;box-sizing:border-box"></div>
<div style="left:716px;top:628px;width:297px;height:15px;background:#f0f0f0;border-top:1px solid #a0a0a0;border-left:1px solid #a0a0a0;border-bottom:1px solid #fff;border-right:1px solid #fff;box-sizing:border-box"></div>
<div class="t" style="left:286.00px;top:630.69px;font-size:11px;line-height:11px;color:#000;font-weight:normal;letter-spacing:-0.019px;">0 B/s</div>
<div class="t" style="left:375.00px;top:630.69px;font-size:11px;line-height:11px;color:#000;font-weight:normal;letter-spacing:-0.103px;">0 Bytes</div>
<div class="t" style="left:484.55px;top:630.69px;font-size:11px;line-height:11px;color:#000;font-weight:bold;letter-spacing:-0.273px;">EMMC</div>
<div class="t" style="left:548.40px;top:630.69px;font-size:11px;line-height:11px;color:#000;font-weight:normal;letter-spacing:-0.393px;">High Speed</div>
<div class="t" style="left:659.60px;top:630.69px;font-size:11px;line-height:11px;color:#000;font-weight:normal;letter-spacing:0.041px;">0:00</div>
<div class="t" style="left:719.70px;top:630.69px;font-size:11px;line-height:11px;color:#000;font-weight:normal;letter-spacing:-0.110px;">USB: DA Download All(high speed,auto detect)</div>
</body></html>
